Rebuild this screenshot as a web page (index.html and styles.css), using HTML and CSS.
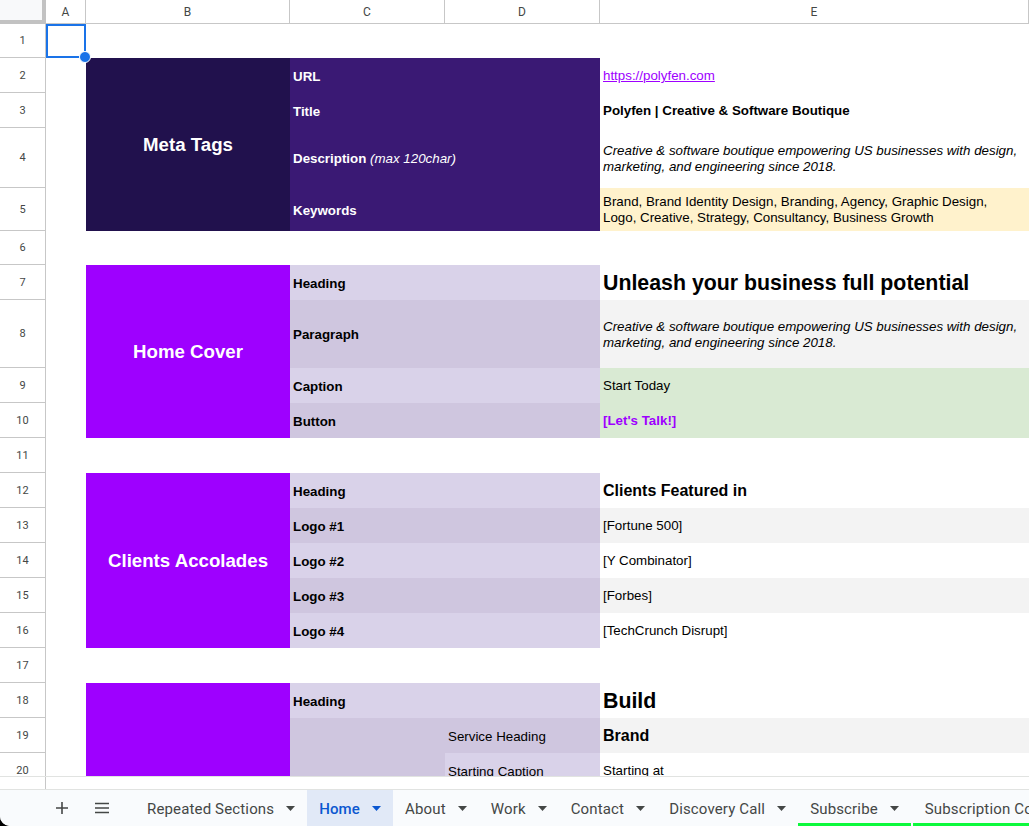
FILE: index.html
```html
<!DOCTYPE html>
<html lang="en">
<head>
<meta charset="utf-8">
<title>Polyfen – Home</title>
<link rel="stylesheet" href="styles.css">
</head>
<body>
<div class="app">
  <div class="sheet">
    <div class="corner"></div>
    <div class="colhead">A</div>
    <div class="colhead">B</div>
    <div class="colhead">C</div>
    <div class="colhead">D</div>
    <div class="colhead">E</div>

    <div class="rowhead r1">1</div>
    <div class="rowhead r2">2</div>
    <div class="rowhead r3">3</div>
    <div class="rowhead r4">4</div>
    <div class="rowhead r5">5</div>
    <div class="rowhead r6">6</div>
    <div class="rowhead r7">7</div>
    <div class="rowhead r8">8</div>
    <div class="rowhead r9">9</div>
    <div class="rowhead r10">10</div>
    <div class="rowhead r11">11</div>
    <div class="rowhead r12">12</div>
    <div class="rowhead r13">13</div>
    <div class="rowhead r14">14</div>
    <div class="rowhead r15">15</div>
    <div class="rowhead r16">16</div>
    <div class="rowhead r17">17</div>
    <div class="rowhead r18">18</div>
    <div class="rowhead r19">19</div>
    <div class="rowhead r20">20</div>

    <div class="cell-a1 r1"></div>

    <!-- Meta Tags -->
    <div class="block block-dark cb r2 span4">Meta Tags</div>
    <div class="label meta ccd r2">URL</div>
    <div class="label meta ccd r3">Title</div>
    <div class="label meta ccd r4">Description&nbsp;<i class="note">(max 120char)</i></div>
    <div class="label meta ccd r5">Keywords</div>
    <div class="value ce r2"><a class="link" href="#">https://polyfen.com</a></div>
    <div class="value bold ce r3">Polyfen | Creative &amp; Software Boutique</div>
    <div class="value italic ce r4">Creative &amp; software boutique empowering US businesses with design,<br>marketing, and engineering since 2018.</div>
    <div class="value yellow ce r5">Brand, Brand Identity Design, Branding, Agency, Graphic Design,<br>Logo, Creative, Strategy, Consultancy, Business Growth</div>

    <!-- Home Cover -->
    <div class="block block-purple cb r7 span4">Home Cover</div>
    <div class="label lp1 ccd r7">Heading</div>
    <div class="label lp2 ccd r8">Paragraph</div>
    <div class="label lp1 ccd r9">Caption</div>
    <div class="label lp2 ccd r10">Button</div>
    <div class="value h1 ce r7">Unleash your business full potential</div>
    <div class="value italic gray ce r8">Creative &amp; software boutique empowering US businesses with design,<br>marketing, and engineering since 2018.</div>
    <div class="value green ce r9">Start Today</div>
    <div class="value green button-text ce r10">[Let's Talk!]</div>

    <!-- Clients Accolades -->
    <div class="block block-purple cb r12 span5">Clients Accolades</div>
    <div class="label lp1 ccd r12">Heading</div>
    <div class="label lp2 ccd r13">Logo #1</div>
    <div class="label lp1 ccd r14">Logo #2</div>
    <div class="label lp2 ccd r15">Logo #3</div>
    <div class="label lp1 ccd r16">Logo #4</div>
    <div class="value h2 ce r12">Clients Featured in</div>
    <div class="value gray ce r13">[Fortune 500]</div>
    <div class="value ce r14">[Y Combinator]</div>
    <div class="value gray ce r15">[Forbes]</div>
    <div class="value ce r16">[TechCrunch Disrupt]</div>

    <!-- Build -->
    <div class="block block-purple cb r18 span3"></div>
    <div class="label lp1 ccd r18">Heading</div>
    <div class="label lp2 cc r19 span2"></div>
    <div class="label lp2 plain cd r19">Service Heading</div>
    <div class="label lp1 plain cd r20">Starting Caption</div>
    <div class="value h1 ce r18">Build</div>
    <div class="value h2 gray ce r19">Brand</div>
    <div class="value ce r20">Starting at</div>
  </div>

  <div class="hscroll"><div class="hscroll-gutter"></div></div>

  <div class="tabs">
    <button class="tab-icon" aria-label="Add sheet">
      <svg width="14" height="14" viewBox="0 0 14 14"><path d="M7 1v12M1 7h12" stroke="#444746" stroke-width="1.6" fill="none"/></svg>
    </button>
    <button class="tab-icon" aria-label="All sheets">
      <svg width="16" height="12" viewBox="0 0 16 12"><path d="M1 1.5h14M1 6h14M1 10.5h14" stroke="#444746" stroke-width="1.6" fill="none"/></svg>
    </button>
    <div class="tab-list">
      <div class="tab">Repeated Sections<svg class="caret" width="9" height="5" viewBox="0 0 9 5"><path d="M0 0h9L4.5 5z"/></svg></div>
      <div class="tab active">Home<svg class="caret" width="9" height="5" viewBox="0 0 9 5"><path d="M0 0h9L4.5 5z"/></svg></div>
      <div class="tab">About<svg class="caret" width="9" height="5" viewBox="0 0 9 5"><path d="M0 0h9L4.5 5z"/></svg></div>
      <div class="tab">Work<svg class="caret" width="9" height="5" viewBox="0 0 9 5"><path d="M0 0h9L4.5 5z"/></svg></div>
      <div class="tab">Contact<svg class="caret" width="9" height="5" viewBox="0 0 9 5"><path d="M0 0h9L4.5 5z"/></svg></div>
      <div class="tab">Discovery Call<svg class="caret" width="9" height="5" viewBox="0 0 9 5"><path d="M0 0h9L4.5 5z"/></svg></div>
      <div class="tab tagged">Subscribe<svg class="caret" width="9" height="5" viewBox="0 0 9 5"><path d="M0 0h9L4.5 5z"/></svg></div>
      <div class="tab tagged">Subscription Confirmation<svg class="caret" width="9" height="5" viewBox="0 0 9 5"><path d="M0 0h9L4.5 5z"/></svg></div>
    </div>
  </div>
</div>
</body>
</html>
```

FILE: styles.css
```css
* { box-sizing: border-box; }
html { background: #000; }
body { margin: 0; }

.app {
  width: 1029px;
  height: 826px;
  background: #fff;
  border-bottom-left-radius: 10px;
  overflow: hidden;
  display: flex;
  flex-direction: column;
  font-family: "Liberation Sans", Arial, sans-serif;
  font-size: 13.33px;
  color: #000;
}

/* ---------- grid ---------- */
.sheet {
  flex: none;
  height: 776px;
  overflow: hidden;
  display: grid;
  grid-template-columns: 46px 40px 204px 155px 155px 429px;
  grid-template-rows: 24px 34px 35px 35px 60px 43px 34px 35px 68px repeat(12, 35px);
}

.corner {
  grid-row: 1;
  grid-column: 1;
  background: #f8f9fa;
  border-right: 4px solid #c2c2c2;
  border-bottom: 4px solid #c2c2c2;
}
.colhead {
  grid-row: 1;
  border-right: 1px solid #c7c7c7;
  border-bottom: 1px solid #c7c7c7;
  display: flex;
  align-items: center;
  justify-content: center;
  font-family: Roboto, "Liberation Sans", sans-serif;
  font-size: 12px;
  color: #444746;
}
.rowhead {
  grid-column: 1;
  border-right: 1px solid #c7c7c7;
  border-bottom: 1px solid #c7c7c7;
  display: flex;
  align-items: center;
  justify-content: center;
  font-family: Roboto, "Liberation Sans", sans-serif;
  font-size: 11px;
  color: #444746;
}

/* row placement (sheet row n -> grid row n+1) */
.r1 { grid-row: 2; }
.r2 { grid-row: 3; }
.r3 { grid-row: 4; }
.r4 { grid-row: 5; }
.r5 { grid-row: 6; }
.r6 { grid-row: 7; }
.r7 { grid-row: 8; }
.r8 { grid-row: 9; }
.r9 { grid-row: 10; }
.r10 { grid-row: 11; }
.r11 { grid-row: 12; }
.r12 { grid-row: 13; }
.r13 { grid-row: 14; }
.r14 { grid-row: 15; }
.r15 { grid-row: 16; }
.r16 { grid-row: 17; }
.r17 { grid-row: 18; }
.r18 { grid-row: 19; }
.r19 { grid-row: 20; }
.r20 { grid-row: 21; }
.span2 { grid-row-end: span 2; }
.span3 { grid-row-end: span 3; }
.span4 { grid-row-end: span 4; }
.span5 { grid-row-end: span 5; }

/* column placement */
.cb { grid-column: 3; }
.cc { grid-column: 4; }
.cd { grid-column: 5; }
.ccd { grid-column: 4 / span 2; }
.ce { grid-column: 6; }

/* selected cell */
.cell-a1 {
  grid-column: 2;
  position: relative;
  z-index: 2;
  box-shadow: inset 0 0 0 2px #1a73e8;
}
.cell-a1::after {
  content: "";
  position: absolute;
  right: -5px;
  bottom: -5px;
  width: 10px;
  height: 10px;
  border-radius: 50%;
  background: #1a73e8;
  border: 1px solid #fff;
}

/* section blocks */
.block {
  display: flex;
  align-items: center;
  justify-content: center;
  color: #fff;
  font-weight: bold;
  font-size: 18.67px;
  padding-top: 1px;
}
.block-dark { background: #21114d; }
.block-purple { background: #9e00ff; }

/* labels (C:D) */
.label {
  display: flex;
  align-items: center;
  padding: 1px 3px 0;
  font-weight: bold;
  white-space: nowrap;
}
.label.plain { font-weight: normal; }
.meta { background: #3a1974; color: #fff; }
.note { font-weight: normal; }
.lp1 { background: #d9d2e9; }
.lp2 { background: #cfc6df; }

/* values (E) */
.value {
  display: flex;
  align-items: center;
  padding: 1px 3px 0;
  line-height: 16px;
  white-space: nowrap;
}
.value.bold { font-weight: bold; }
.value.italic { font-style: italic; }
.value.h1 { font-weight: bold; font-size: 21.33px; }
.value.h2 { font-weight: bold; font-size: 16px; }
.yellow { background: #fff2cc; }
.gray { background: #f3f3f3; }
.green { background: #d9ead3; }
.button-text { color: #9e00ff; font-weight: bold; }
.link { color: #9e00ff; text-decoration: underline; }

/* horizontal scroll strip */
.hscroll {
  flex: none;
  height: 14px;
  border-top: 1px solid #e1e3e1;
  border-bottom: 1px solid #e1e3e1;
  background: #fff;
}
.hscroll-gutter {
  width: 46px;
  height: 100%;
  border-right: 1px solid #c7c7c7;
}

/* sheet tabs */
.tabs {
  flex: 1;
  display: flex;
  align-items: stretch;
  background: #f9fbfd;
  padding-left: 44px;
  font-family: Roboto, "Liberation Sans", sans-serif;
  font-size: 15px;
  font-weight: 400;
  color: #444746;
  white-space: nowrap;
  overflow: hidden;
}
.tab-icon {
  flex: none;
  width: 36px;
  margin-right: 4px;
  border: 0;
  padding: 0;
  background: transparent;
  display: flex;
  align-items: center;
  justify-content: center;
}
.tab-list {
  flex: none;
  display: flex;
  margin-left: 11px;
}
.tab {
  flex: none;
  display: flex;
  align-items: center;
  gap: 12px;
  padding: 1px 12px 0;
  letter-spacing: 0.15px;
}
.caret { fill: #444746; }
.tab.active { background: #e1e9f7; color: #0b57d0; font-weight: 500; }
.tab.active .caret { fill: #0b57d0; }
.tab.tagged { box-shadow: inset 0 -3px 0 #0cf93c; margin-right: 2px; }
```
